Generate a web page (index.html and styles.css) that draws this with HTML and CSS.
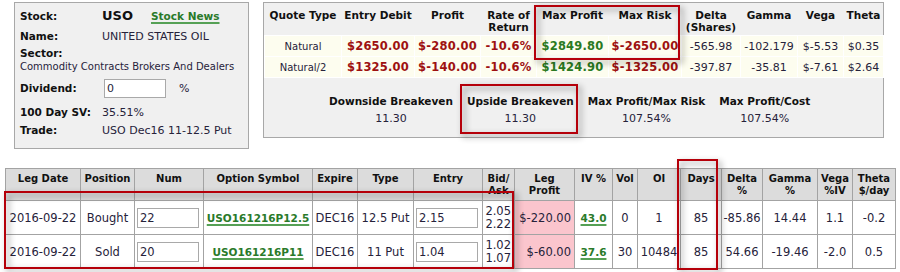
FILE: index.html
```html
<!DOCTYPE html>
<html>
<head>
<meta charset="utf-8">
<link rel="stylesheet" href="styles.css">
</head>
<body>
<div class="page">
  <div class="top">
    <div class="stock-panel">
      <div class="srow r-stock"><span class="lbl">Stock:</span><span class="ticker">USO</span><a class="news" href="#">Stock News</a></div>
      <div class="srow r-name"><span class="lbl">Name:</span><span class="val">UNITED STATES OIL</span></div>
      <div class="sector"><div class="lbl">Sector:</div><div class="val">Commodity Contracts Brokers And Dealers</div></div>
      <div class="srow r-div"><span class="lbl">Dividend:</span><input class="box div-in" type="text" value="0"><span class="pct">%</span></div>
      <div class="srow r-sv"><span class="lbl">100 Day SV:</span><span class="val">35.51%</span></div>
      <div class="srow r-trade"><span class="lbl">Trade:</span><span class="val">USO Dec16 11-12.5 Put</span></div>
    </div>
    <div class="quote-panel">
      <table class="quotes">
        <colgroup>
          <col style="width:77px"><col style="width:73px"><col style="width:66px"><col style="width:56px"><col style="width:72px"><col style="width:73px"><col style="width:59px"><col style="width:57px"><col style="width:46px"><col style="width:40px">
        </colgroup>
        <thead>
          <tr><th>Quote Type</th><th>Entry Debit</th><th>Profit</th><th>Rate of<br>Return</th><th>Max Profit</th><th>Max Risk</th><th>Delta<br>(Shares)</th><th>Gamma</th><th>Vega</th><th>Theta</th></tr>
        </thead>
        <tbody>
          <tr><td>Natural</td><td class="neg">$2650.00</td><td class="neg">$-280.00</td><td class="neg">-10.6%</td><td class="pos">$2849.80</td><td class="neg">$-2650.00</td><td class="num">-565.98</td><td class="num">-102.179</td><td class="num">$-5.53</td><td class="num">$0.35</td></tr>
          <tr><td>Natural/2</td><td class="neg">$1325.00</td><td class="neg">$-140.00</td><td class="neg">-10.6%</td><td class="pos">$1424.90</td><td class="neg">$-1325.00</td><td class="num">-397.87</td><td class="num">-35.81</td><td class="num">$-7.61</td><td class="num">$2.64</td></tr>
        </tbody>
      </table>
      <div class="breakeven">
        <div class="be"><div class="be-l">Downside Breakeven</div><div class="be-v">11.30</div></div>
        <div class="be"><div class="be-l">Upside Breakeven</div><div class="be-v">11.30</div></div>
        <div class="be"><div class="be-l">Max Profit/Max Risk</div><div class="be-v">107.54%</div></div>
        <div class="be"><div class="be-l">Max Profit/Cost</div><div class="be-v">107.54%</div></div>
      </div>
    </div>
  </div>

  <table class="legs">
    <colgroup>
      <col style="width:75px"><col style="width:54px"><col style="width:69px"><col style="width:109px"><col style="width:45px"><col style="width:56px"><col style="width:69px"><col style="width:32px"><col style="width:60px"><col style="width:38px"><col style="width:25px"><col style="width:43px"><col style="width:41px"><col style="width:41px"><col style="width:55px"><col style="width:35px"><col style="width:43px">
    </colgroup>
    <thead>
      <tr><th>Leg Date</th><th>Position</th><th>Num</th><th>Option Symbol</th><th>Expire</th><th>Type</th><th>Entry</th><th>Bid/<br>Ask</th><th>Leg<br>Profit</th><th>IV %</th><th>Vol</th><th>OI</th><th>Days</th><th>Delta<br>%</th><th>Gamma<br>%</th><th>Vega<br>%IV</th><th>Theta<br>$/day</th></tr>
    </thead>
    <tbody>
      <tr><td class="date">2016-09-22</td><td>Bought</td><td class="in"><input class="box" type="text" value="22"></td><td><a class="sym" href="#">USO161216P12.5</a></td><td>DEC16</td><td>12.5 Put</td><td class="in"><input class="box" type="text" value="2.15"></td><td class="ba">2.05<br>2.22</td><td class="lp">$-220.00</td><td><a class="sym" href="#">43.0</a></td><td>0</td><td>1</td><td>85</td><td>-85.86</td><td>14.44</td><td>1.1</td><td>-0.2</td></tr>
      <tr><td class="date">2016-09-22</td><td>Sold</td><td class="in"><input class="box" type="text" value="20"></td><td><a class="sym" href="#">USO161216P11</a></td><td>DEC16</td><td>11 Put</td><td class="in"><input class="box" type="text" value="1.04"></td><td class="ba">1.02<br>1.07</td><td class="lp">$-60.00</td><td><a class="sym" href="#">37.6</a></td><td>30</td><td>10484</td><td>85</td><td>54.66</td><td>-19.46</td><td>-2.0</td><td>0.5</td></tr>
    </tbody>
  </table>

  <div class="mark m-max"></div>
  <div class="mark m-up"></div>
  <div class="mark m-legs"></div>
  <div class="mark m-days"></div>
</div>
</body>
</html>
```

FILE: styles.css
```css
* { box-sizing: border-box; }
body {
  margin: 0;
  background: #fff;
  font-family: "DejaVu Sans", Verdana, sans-serif;
  color: #26223a;
}
.page { position: relative; width: 900px; height: 272px; overflow: hidden; }

.top { display: flex; align-items: flex-start; gap: 14px; padding: 2px 0 0 14px; }

/* stock panel */
.stock-panel {
  width: 235px; height: 147px;
  border: 1px solid #a8a8a8;
  background: #f0f0f0;
  padding: 0 0 0 5px;
}
.srow { display: flex; align-items: center; }
.lbl { font-weight: bold; font-size: 10.5px; color: #111; width: 82px; flex: none; }
.val { font-size: 11px; }
.r-stock { height: 25px; }
.r-name { height: 16px; }
.sector { padding-top: 3px; line-height: 13px; height: 29px; }
.sector .val { font-size: 10px; white-space: nowrap; }
.r-div { height: 30px; }
.r-sv { height: 18px; }
.r-trade { height: 18px; }
.ticker { font-weight: bold; font-size: 13px; color: #111; }
.news {
  margin-left: 18px; font-weight: bold; font-size: 10.5px; color: #2a7a2a;
  text-decoration: underline; text-decoration-color: #55a055; text-decoration-thickness: 2px; text-underline-offset: 2px;
}
.box {
  font-family: "DejaVu Sans", Verdana, sans-serif;
  font-size: 11.5px; color: #26223a;
  width: 62px; height: 20px;
  border: 1px solid #a9a9a9;
  background: #fff;
  padding: 0 2px;
  margin: 0;
  outline: none;
}
.div-in { margin-left: 2px; height: 19px; font-size: 11px; }
.pct { margin-left: 13px; font-size: 11px; }

/* quote panel */
.quote-panel {
  width: 621px; height: 136px;
  border: 1px solid #a8a8a8;
  background: #f0f0f0;
}
.quotes { border-collapse: collapse; table-layout: fixed; width: 619px; }
.quotes th {
  font-size: 10.5px; font-weight: bold; color: #111;
  line-height: 12px; vertical-align: top;
  padding: 6px 0 2px; height: 32px; white-space: nowrap;
}
.quotes td {
  background: #fdfdef;
  border: 1px solid #fff;
  text-align: center; white-space: nowrap;
  height: 21px; padding: 0;
  font-size: 10px;
}
.quotes td.neg, .quotes td.pos { font-size: 11.5px; font-weight: bold; letter-spacing: 0.2px; }
.quotes td.neg { color: #9e1111; }
.quotes td.pos { color: #2b7a22; }
.quotes td.num { font-size: 11px; }

.breakeven { display: flex; padding: 14px 0 0 58px; }
.be { padding: 0 7px; text-align: center; }
.be-l { font-size: 10.5px; font-weight: bold; color: #111; line-height: 18px; white-space: nowrap; }
.be-v { font-size: 11px; line-height: 18px; }

/* legs table */
.legs {
  margin: 19px 0 0 5px;
  border-collapse: collapse; table-layout: fixed; width: 891px;
}
.legs th, .legs td { border: 1px solid #a3a3a3; padding: 0; text-align: center; white-space: nowrap; }
.legs th {
  background: #dcdcdc; font-size: 10px; font-weight: bold; color: #111;
  line-height: 12px; vertical-align: top; padding-top: 4px; height: 32px;
}
.legs td { background: #fff; font-size: 11.5px; height: 34px; }
.legs td.in { text-align: left; padding-left: 2px; }
.legs td.ba { text-align: right; padding-right: 3px; line-height: 13px; }
.legs td.lp { background: #fbc5cd; text-align: right; padding-right: 3px; }
.sym {
  font-weight: bold; font-size: 10.5px; color: #2a7a2a;
  text-decoration: underline; text-decoration-color: #55a055; text-decoration-thickness: 2px; text-underline-offset: 2px;
}

/* annotation boxes */
.mark {
  position: absolute;
  border: 2px solid #b5000a;
  filter: drop-shadow(3px 3px 3px rgba(0,0,0,0.45));
}
.m-max { left: 534px; top: 5px; width: 146px; height: 55px; }
.m-up { left: 460px; top: 84px; width: 118px; height: 50px; }
.m-legs { left: 4px; top: 191px; width: 510px; height: 78px; }
.m-days { left: 677px; top: 159px; width: 41px; height: 111px; }
```
